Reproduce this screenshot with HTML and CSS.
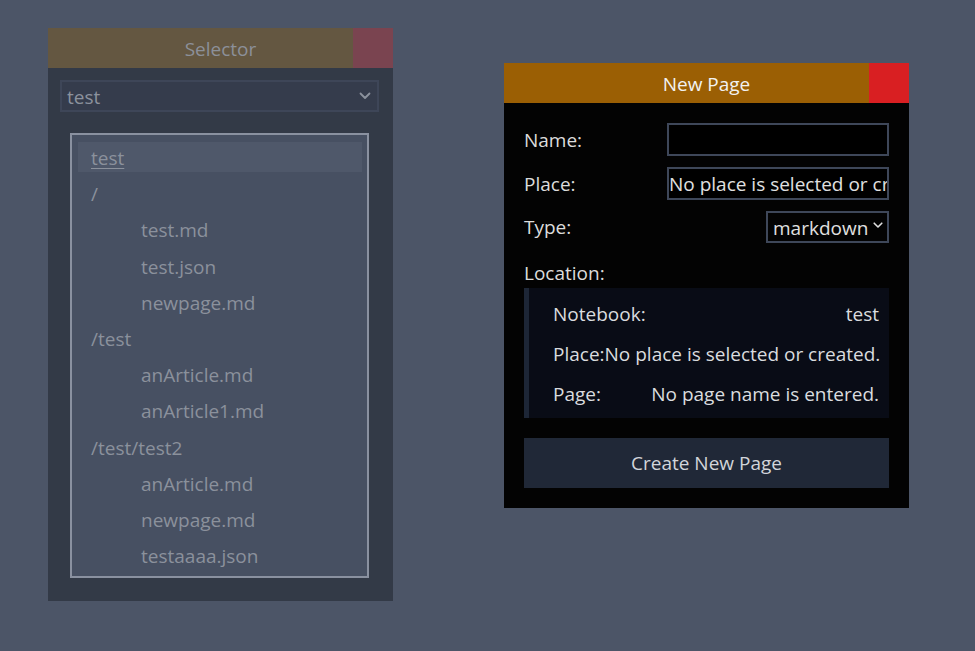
FILE: index.html
```html
<!DOCTYPE html>
<html>
<head>
<meta charset="utf-8">
<link rel="stylesheet" href="styles.css">
</head>
<body>
<div class="desk">
  <section class="win selector">
    <header class="win-head sel-head">
      <span class="win-title">Selector</span>
      <span class="win-close sel-close"></span>
    </header>
    <div class="sel-body">
      <div class="sel-select">
        <span>test</span>
        <svg class="chev" width="12" height="8" viewBox="0 0 12 8"><path d="M1.5 1.5 L6 6 L10.5 1.5" fill="none" stroke="currentColor" stroke-width="1.8" stroke-linecap="round" stroke-linejoin="round"/></svg>
      </div>
      <ul class="tree">
        <li class="item active"><span class="u">test</span></li>
        <li class="item">/</li>
        <li class="item child">test.md</li>
        <li class="item child">test.json</li>
        <li class="item child">newpage.md</li>
        <li class="item">/test</li>
        <li class="item child">anArticle.md</li>
        <li class="item child">anArticle1.md</li>
        <li class="item">/test/test2</li>
        <li class="item child">anArticle.md</li>
        <li class="item child">newpage.md</li>
        <li class="item child">testaaaa.json</li>
      </ul>
    </div>
  </section>

  <section class="win newpage">
    <header class="win-head np-head">
      <span class="win-title">New Page</span>
      <span class="win-close np-close"></span>
    </header>
    <div class="np-body">
      <div class="row">
        <label class="lbl">Name:</label>
        <div class="inp"></div>
      </div>
      <div class="row">
        <label class="lbl">Place:</label>
        <div class="inp"><span class="inp-text">No place is selected or created.</span></div>
      </div>
      <div class="row">
        <label class="lbl">Type:</label>
        <div class="type-sel">
          <span>markdown</span>
          <svg class="chev2" width="10" height="7" viewBox="0 0 10 7"><path d="M1.2 1.2 L5 5 L8.8 1.2" fill="none" stroke="currentColor" stroke-width="1.6" stroke-linecap="round" stroke-linejoin="round"/></svg>
        </div>
      </div>
      <div class="loc-label">Location:</div>
      <div class="loc">
        <div class="loc-row"><span>Notebook:</span><span>test</span></div>
        <div class="loc-row"><span>Place:</span><span>No place is selected or created.</span></div>
        <div class="loc-row"><span>Page:</span><span>No page name is entered.</span></div>
      </div>
      <button class="create">Create New Page</button>
    </div>
  </section>
</div>
</body>
</html>
```

FILE: styles.css
```css
html, body {
  margin: 0;
  padding: 0;
  width: 975px;
  height: 651px;
  background: #4c5567;
  font-family: "Open Sans", "Noto Sans", sans-serif;
  font-size: 19px;
  overflow: hidden;
}

.desk {
  position: relative;
  width: 975px;
  height: 651px;
}

.win {
  position: absolute;
  display: flex;
  flex-direction: column;
}

.selector {
  left: 48px;
  top: 28px;
  width: 345px;
  height: 573px;
  background: #333a47;
}

.newpage {
  left: 504px;
  top: 63px;
  width: 405px;
  background: #030303;
}

.win-head {
  position: relative;
  height: 40px;
  display: flex;
  align-items: center;
  justify-content: center;
  flex-shrink: 0;
}

.win-close {
  position: absolute;
  right: 0;
  top: 0;
  width: 40px;
  height: 40px;
}

.sel-head { background: #645741; color: #8c9099; }
.sel-close { background: #7a4450; }
.np-head { background: #9b5f04; color: #f2f2f2; }
.np-close { background: #d91f22; }

.win-title { line-height: 40px; padding-top: 2px; }

/* selector body */
.sel-body {
  padding: 12px 14px 12px 12px;
  display: flex;
  flex-direction: column;
  flex: 1;
}

.sel-select {
  height: 32px;
  box-sizing: border-box;
  border: 2px solid #3e4658;
  background: #353c4c;
  color: #8c929d;
  display: flex;
  align-items: center;
  justify-content: space-between;
  padding: 2px 6px 0 5px;
}

.chev { color: #8c929d; margin-top: -2px; }

.tree {
  list-style: none;
  margin: 21px 10px 0 10px;
  padding: 7px 5px 4px 6px;
  border: 2px solid #8a91a0;
  background: #475062;
  height: 445px;
  box-sizing: border-box;
}

.item {
  height: 30px;
  line-height: 32px;
  margin-bottom: 6.2px;
  padding-left: 13px;
  color: #8b919c;
}

.item.child { padding-left: 63px; }

.item.active { background: #4f586a; }

.u { text-decoration: underline; text-underline-offset: 3px; }

/* new page body */
.np-body {
  padding: 20px;
  display: flex;
  flex-direction: column;
}

.row {
  display: flex;
  align-items: center;
  justify-content: space-between;
  margin-bottom: 11px;
}

.lbl { color: #dcdcdc; }

.inp {
  width: 222px;
  height: 33px;
  box-sizing: border-box;
  border: 2px solid #3e4759;
  background: #000;
  overflow: hidden;
  white-space: nowrap;
  display: flex;
  align-items: center;
  padding-left: 0;
}

.inp-text { color: #e0e0e0; }

.type-sel {
  width: 123px;
  height: 32px;
  box-sizing: border-box;
  border: 2px solid #3e4759;
  display: flex;
  align-items: center;
  justify-content: space-between;
  padding: 1px 4px 0 5px;
  color: #e0e0e0;
  white-space: nowrap;
}

.chev2 { color: #e0e0e0; margin-top: -4px; flex-shrink: 0; }

.loc-label {
  color: #dcdcdc;
  margin-top: 6px;
  line-height: 26px;
  margin-bottom: 2px;
}

.loc {
  background: #090c16;
  border-left: 5px solid #1d2636;
  padding: 6px 10px 4px 24px;
}

.loc-row {
  height: 40px;
  display: flex;
  align-items: center;
  justify-content: space-between;
  color: #dadcdf;
  white-space: nowrap;
}

.create {
  margin-top: 20px;
  height: 50px;
  border: none;
  background: #202837;
  color: #d2d5da;
  font-family: inherit;
  font-size: 19px;
}
```
